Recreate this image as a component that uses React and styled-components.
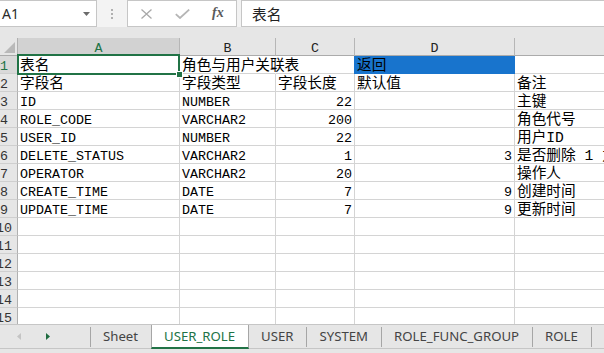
import styled, { createGlobalStyle } from "styled-components"

const green = "#217346"
const grid = "#d4d4d4"
const head = "#e6e6e6"

const GlobalStyle = createGlobalStyle`
    html, body {
        margin: 0;
        padding: 0;
        background: #ffffff;
        overflow: hidden;
    }
`

const columns = [
    { name: "A", width: 162 },
    { name: "B", width: 96 },
    { name: "C", width: 79 },
    { name: "D", width: 160 },
    { name: "", width: 220 },
]

const data = [
    ["表名", "角色与用户关联表", "", "返回", ""],
    ["字段名", "字段类型", "字段长度", "默认值", "备注"],
    ["ID", "NUMBER", 22, "", "主键"],
    ["ROLE_CODE", "VARCHAR2", 200, "", "角色代号"],
    ["USER_ID", "NUMBER", 22, "", "用户ID"],
    ["DELETE_STATUS", "VARCHAR2", 1, 3, "是否删除 1 为删除 0 为未删除"],
    ["OPERATOR", "VARCHAR2", 20, "", "操作人"],
    ["CREATE_TIME", "DATE", 7, 9, "创建时间"],
    ["UPDATE_TIME", "DATE", 7, 9, "更新时间"],
]

const sheets = ["Sheet", "USER_ROLE", "USER", "SYSTEM", "ROLE_FUNC_GROUP", "ROLE"]

const hasHan = (v) => typeof v === "string" && /[\u4e00-\u9fff]/.test(v)

export default function App() {
    const rows = []
    for (let i = 0; i < 15; i++) rows.push(data[i] || ["", "", "", "", ""])

    return (
        <Window>
            <GlobalStyle />
            <FormulaBar>
                <NameBox>
                    <span>A1</span>
                    <svg width="7" height="4" viewBox="0 0 7 4"><polygon points="0,0 7,0 3.5,4" fill="#6b6b6b" /></svg>
                </NameBox>
                <Grip>
                    <svg width="2" height="10" viewBox="0 0 2 10">
                        <rect x="0" y="0" width="2" height="2" fill="#b0b0b0" />
                        <rect x="0" y="4" width="2" height="2" fill="#b0b0b0" />
                        <rect x="0" y="8" width="2" height="2" fill="#b0b0b0" />
                    </svg>
                </Grip>
                <ActionBox>
                    <svg width="11" height="10" viewBox="0 0 11 10">
                        <path d="M0.5 0.5 L10.5 9.5 M10.5 0.5 L0.5 9.5" stroke="#a9a9a9" strokeWidth="1.3" fill="none" />
                    </svg>
                    <svg width="15" height="10" viewBox="0 0 15 10">
                        <path d="M0.8 5.2 L5 9 L14.2 0.6" stroke="#b5b5b5" strokeWidth="1.8" fill="none" />
                    </svg>
                    <Fx>fx</Fx>
                </ActionBox>
                <FormulaInput>表名</FormulaInput>
            </FormulaBar>
            <Strip />
            <Sheet>
                <Row>
                    <Corner>
                        <svg width="11" height="11" viewBox="0 0 11 11"><polygon points="11,0 11,11 0,11" fill="#b9b9b9" /></svg>
                    </Corner>
                    {columns.map((c, i) => (
                        <ColHead key={i} $w={c.width} $active={i === 0}>{c.name}</ColHead>
                    ))}
                </Row>
                {rows.map((r, ri) => (
                    <Row key={ri}>
                        <RowHead $active={ri === 0}><RowNum>{ri + 1}</RowNum></RowHead>
                        {r.map((v, ci) => (
                            <Cell
                                key={ci}
                                $w={columns[ci].width}
                                $han={hasHan(v)}
                                $num={typeof v === "number"}
                                $spill={ri === 0 && ci === 1}
                                $fill={ri === 0 && ci === 3 ? "#1874cd" : null}
                            >
                                {v}
                            </Cell>
                        ))}
                    </Row>
                ))}
                <Selection><Handle /></Selection>
            </Sheet>
            <TabBar>
                <TabRow>
                    <Nav>
                        <svg width="4" height="7" viewBox="0 0 4 7"><polygon points="4,0 4,7 0,3.5" fill="#c4c4c4" /></svg>
                        <svg width="4" height="7" viewBox="0 0 4 7"><polygon points="0,0 0,7 4,3.5" fill="#1e6b3f" /></svg>
                    </Nav>
                    <Sep />
                    {sheets.map((s, i) => (
                        <TabGroup key={s}>
                            <Tab $active={i === 1}>{s}</Tab>
                            {i !== 0 && i !== 1 && <Sep />}
                        </TabGroup>
                    ))}
                </TabRow>
            </TabBar>
        </Window>
    )
}

const Window = styled.div`
    width: 604px;
    height: 353px;
    display: flex;
    flex-direction: column;
    overflow: hidden;
    background: #ffffff;
`
const FormulaBar = styled.div`
    height: 27px;
    flex: none;
    display: flex;
    background: #f3f3f3;
`
const NameBox = styled.div`
    width: 97px;
    box-sizing: border-box;
    background: #ffffff;
    border-top: 1px solid #c6c6c6;
    border-right: 1px solid #c6c6c6;
    border-bottom: 1px solid #c6c6c6;
    display: flex;
    align-items: center;
    justify-content: space-between;
    padding: 0 6px 0 2px;
    font-family: "Noto Sans", sans-serif;
    font-size: 14px;
    color: #2b2b2b;
    span {
        margin-top: -1px;
    }
`
const Grip = styled.div`
    width: 30px;
    display: flex;
    align-items: center;
    justify-content: center;
    padding-top: 1px;
`
const ActionBox = styled.div`
    width: 110px;
    box-sizing: border-box;
    background: #ffffff;
    border: 1px solid #c6c6c6;
    display: flex;
    align-items: center;
    padding-left: 13px;
    gap: 23px;
`
const Fx = styled.span`
    font-family: "Liberation Serif", serif;
    font-style: italic;
    font-weight: bold;
    font-size: 14px;
    color: #5a5a5a;
    margin-left: -1px;
    margin-top: -1px;
`
const FormulaInput = styled.div`
    flex: 1;
    margin-left: 4px;
    box-sizing: border-box;
    background: #ffffff;
    border-top: 1px solid #c6c6c6;
    border-left: 1px solid #c6c6c6;
    border-bottom: 1px solid #c6c6c6;
    padding: 1px 0 0 10px;
    font-family: "Noto Sans CJK SC", sans-serif;
    font-size: 14.67px;
    line-height: 24px;
    color: #222222;
`
const Strip = styled.div`
    height: 11px;
    flex: none;
    background: ${head};
`
const Sheet = styled.div`
    position: relative;
    flex: 1;
    overflow: hidden;
    font-family: "Liberation Mono", "Noto Sans CJK SC", monospace;
    font-size: 13.33px;
`
const Row = styled.div`
    display: flex;
    height: 18px;
`
const Corner = styled.div`
    width: 18px;
    height: 18px;
    flex: none;
    box-sizing: border-box;
    background: ${head};
    border-right: 1px solid #b0b0b0;
    border-bottom: 1px solid #ababab;
    display: flex;
    align-items: flex-end;
    justify-content: flex-end;
    padding: 0 2px 2px 0;
`
const ColHead = styled.div`
    flex: none;
    width: ${p => p.$w}px;
    height: 18px;
    box-sizing: border-box;
    background: ${p => (p.$active ? "#d2d2d2" : head)};
    border-right: 1px solid #b6b6b6;
    border-bottom: 1px solid #ababab;
    color: ${p => (p.$active ? green : "#222222")};
    text-align: center;
    line-height: 17px;
    padding-top: 2px;
`
const RowHead = styled.div`
    flex: none;
    width: 18px;
    height: 18px;
    box-sizing: border-box;
    overflow: hidden;
    background: ${p => (p.$active ? "#d9d9d9" : head)};
    border-right: 1px solid #b0b0b0;
    border-bottom: 1px solid #cfcfcf;
    color: ${p => (p.$active ? green : "#333333")};
    line-height: 17px;
    padding-top: 2px;
`
const RowNum = styled.div`
    width: 28px;
    margin-left: -10px;
    text-align: center;
`
const Cell = styled.div`
    flex: none;
    width: ${p => p.$w}px;
    height: 18px;
    box-sizing: border-box;
    border-right: 1px solid ${p => (p.$fill ? p.$fill : p.$spill ? "transparent" : grid)};
    border-bottom: 1px solid ${p => p.$fill || grid};
    background: ${p => p.$fill || "transparent"};
    box-shadow: ${p => (p.$fill ? `-1px 0 0 ${p.$fill}` : "none")};
    padding: ${p => (p.$han ? "3px 2px 0" : "2px 2px 0")};
    font-size: ${p => (p.$han ? "14.67px" : "13.33px")};
    line-height: ${p => (p.$han ? "15px" : "17px")};
    text-align: ${p => (p.$num ? "right" : "left")};
    white-space: nowrap;
    color: #000000;
`
const Selection = styled.div`
    position: absolute;
    left: 17px;
    top: 16px;
    width: 163px;
    height: 21px;
    box-sizing: border-box;
    border: 2px solid ${green};
    pointer-events: none;
`
const Handle = styled.div`
    position: absolute;
    right: -5px;
    bottom: -5px;
    width: 7px;
    height: 7px;
    box-sizing: border-box;
    background: ${green};
    border: 1px solid #ffffff;
`
const TabBar = styled.div`
    height: 29px;
    flex: none;
    box-sizing: border-box;
    border-top: 1px solid #c6c6c6;
    background: ${head};
    padding-bottom: 4px;
    font-family: "Noto Sans", sans-serif;
    font-size: 13.2px;
`
const TabRow = styled.div`
    height: 24px;
    box-sizing: border-box;
    border-bottom: 1px solid #c6c6c6;
    display: flex;
    align-items: flex-start;
`
const Nav = styled.div`
    width: 90px;
    height: 23px;
    display: flex;
    align-items: center;
    gap: 25px;
    padding-left: 17px;
    box-sizing: border-box;
`
const Sep = styled.div`
    width: 1px;
    height: 20px;
    margin-top: 2px;
    background: #a6a6a6;
    flex: none;
`
const TabGroup = styled.div`
    display: flex;
    align-items: flex-start;
`
const Tab = styled.div`
    height: ${p => (p.$active ? "24px" : "23px")};
    box-sizing: border-box;
    padding: 0 13px 0 12px;
    line-height: 23px;
    white-space: nowrap;
    color: ${p => (p.$active ? green : "#444444")};
    background: ${p => (p.$active ? "#ffffff" : "transparent")};
    border-left: ${p => (p.$active ? "1px solid #a6a6a6" : "none")};
    border-right: ${p => (p.$active ? "1px solid #a6a6a6" : "none")};
    border-bottom: ${p => (p.$active ? `2px solid ${green}` : "none")};
    margin-bottom: ${p => (p.$active ? "-1px" : "0")};
`
